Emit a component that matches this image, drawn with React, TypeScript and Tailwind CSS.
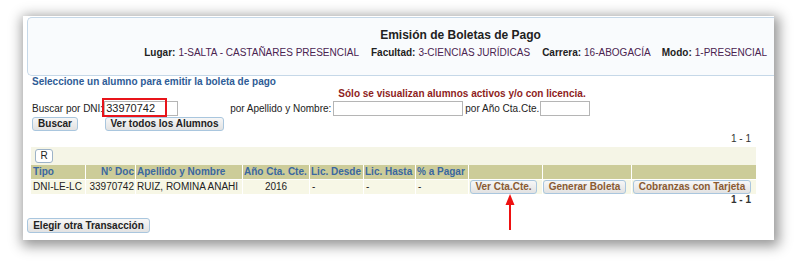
import React from "react";

function Btn({ children, className }: { children: React.ReactNode; className: string }) {
  return (
    <button
      className={
        "flex items-center justify-center rounded-[3px] border border-[#a9c6de] bg-linear-to-b from-[#f7f7f7] to-[#e2e2e2] text-[10px] font-bold leading-[12px] " +
        className
      }
    >
      {children}
    </button>
  );
}

export default function App() {
  const head = "bg-[#cccc99] text-[#3a67a0] font-bold h-[14px] leading-[14px]";
  const cell = "bg-[#f7f7e6] text-[#222] h-[14px] leading-[14px]";
  return (
    <div className="w-[798px] h-[265px] bg-white overflow-hidden font-['Liberation_Sans',Arial,sans-serif] text-[10px] text-[#222]">
      <div className="relative ml-[23px] mt-[16px] w-[751px] h-[224px] bg-white shadow-[2px_3px_12px_3px_rgba(0,0,0,0.42)]">
        {/* header */}
        <div className="ml-[4px] pt-[1px]">
          <div className="h-[59px] rounded-l-[5px] border border-r-0 border-[#c6d8e8] bg-[#f9fbfd] pt-[10px]">
            <div className="pl-[119px] text-center text-[12px] font-bold leading-[14px] text-[#222]">
              Emisión de Boletas de Pago
            </div>
            <div className="mt-[5px] flex justify-end pr-[7px] leading-[12px] text-[#4a2350]">
              <span className="font-bold text-[#222]">Lugar:</span>
              <span className="ml-[3px]">1-SALTA - CASTAÑARES PRESENCIAL</span>
              <span className="ml-[12px] font-bold text-[#222]">Facultad:</span>
              <span className="ml-[3px]">3-CIENCIAS JURÍDICAS</span>
              <span className="ml-[12px] font-bold text-[#222]">Carrera:</span>
              <span className="ml-[3px]">16-ABOGACÍA</span>
              <span className="ml-[11px] font-bold text-[#222]">Modo:</span>
              <span className="ml-[3px]">1-PRESENCIAL</span>
            </div>
          </div>
        </div>

        <div className="pl-[9px] font-bold leading-[12px] text-[#2e5c96]">
          Seleccione un alumno para emitir la boleta de pago
        </div>
        <div className="pl-[127px] text-center font-bold leading-[12px] text-[#8e1d1d]">
          Sólo se visualizan alumnos activos y/o con licencia.
        </div>

        {/* search row */}
        <div className="relative flex h-[17px] items-center pl-[9px]">
          <span>Buscar por DNI:</span>
          <div className="ml-[1px] h-[15px] w-[74px] border border-[#b5b5b5] bg-white pl-[1px] text-[11px] leading-[13px]">
            33970742
          </div>
          <span className="ml-[52px]">por Apellido y Nombre:</span>
          <div className="ml-[2px] h-[15px] w-[130px] border border-[#b5b5b5] bg-white" />
          <span className="ml-[2px]">por Año Cta.Cte.</span>
          <div className="ml-[1px] h-[15px] w-[50px] border border-[#b5b5b5] bg-white" />
          <div className="absolute left-[79px] top-[-2px] h-[19px] w-[65px] border-2 border-[#e8141a]" />
        </div>

        {/* buttons row */}
        <div className="flex h-[14px] pl-[9px]">
          <Btn className="h-[14px] w-[46px] text-[#222]">Buscar</Btn>
          <Btn className="ml-[27px] h-[14px] w-[119px] text-[#222]">Ver todos los Alumnos</Btn>
        </div>

        <div className="mt-[2px] w-[728px] text-right leading-[12px] text-[#333]">1 - 1</div>

        {/* table */}
        <div className="ml-[8px] mt-[2px] w-[725px] bg-[#f5f5e6] pt-[2px]">
          <button className="ml-[4px] flex h-[14px] w-[18px] items-center justify-center rounded-[3px] border border-[#9db3c8] bg-white text-[10px] leading-[12px] text-[#222]">
            R
          </button>
          <div className="mt-[2px] grid grid-cols-[54px_49px_106px_66px_53px_51px_52px_73px_88px_124px] gap-x-[1px] gap-y-[1px] bg-white">
            <div className={head + " pl-[2px]"}>Tipo</div>
            <div className={head + " pr-[1px] text-right"}>N° Doc</div>
            <div className={head + " pl-[1px]"}>Apellido y Nombre</div>
            <div className={head + " pl-[1px]"}>Año Cta. Cte.</div>
            <div className={head + " pl-[1px]"}>Lic. Desde</div>
            <div className={head + " pl-[1px]"}>Lic. Hasta</div>
            <div className={head + " pl-[1px]"}>% a Pagar</div>
            <div className={head}></div>
            <div className={head}></div>
            <div className={head}></div>

            <div className={cell + " pl-[2px]"}>DNI-LE-LC</div>
            <div className={cell + " pr-[1px] text-right"}>33970742</div>
            <div className={cell + " pl-[1px]"}>RUIZ, ROMINA ANAHI</div>
            <div className={cell + " text-center"}>2016</div>
            <div className={cell + " pl-[2px]"}>-</div>
            <div className={cell + " pl-[2px]"}>-</div>
            <div className={cell + " pl-[2px]"}>-</div>
            <div className={cell + " pl-[1px]"}>
              <Btn className="h-[14px] w-[67px] text-[#8a5a32]">Ver Cta.Cte.</Btn>
            </div>
            <div className={cell}>
              <Btn className="h-[14px] w-[83px] text-[#8a5a32]">Generar Boleta</Btn>
            </div>
            <div className={cell + " pl-[1px]"}>
              <Btn className="h-[14px] w-[118px] text-[#8a5a32]">Cobranzas con Tarjeta</Btn>
            </div>
          </div>
        </div>

        <div className="w-[728px] text-right font-bold leading-[12px] text-[#333]">1 - 1</div>

        <div className="ml-[4px] mt-[12px]">
          <Btn className="h-[15px] w-[123px] text-[#222]">Elegir otra Transacción</Btn>
        </div>

        {/* red arrow */}
        <svg className="absolute left-[482px] top-[178px]" width="10" height="37" viewBox="0 0 10 37">
          <polygon points="5,0 9.5,11 0.5,11" fill="#ee1111" />
          <rect x="4" y="10" width="2" height="26" fill="#ee1111" />
        </svg>
      </div>
    </div>
  );
}
